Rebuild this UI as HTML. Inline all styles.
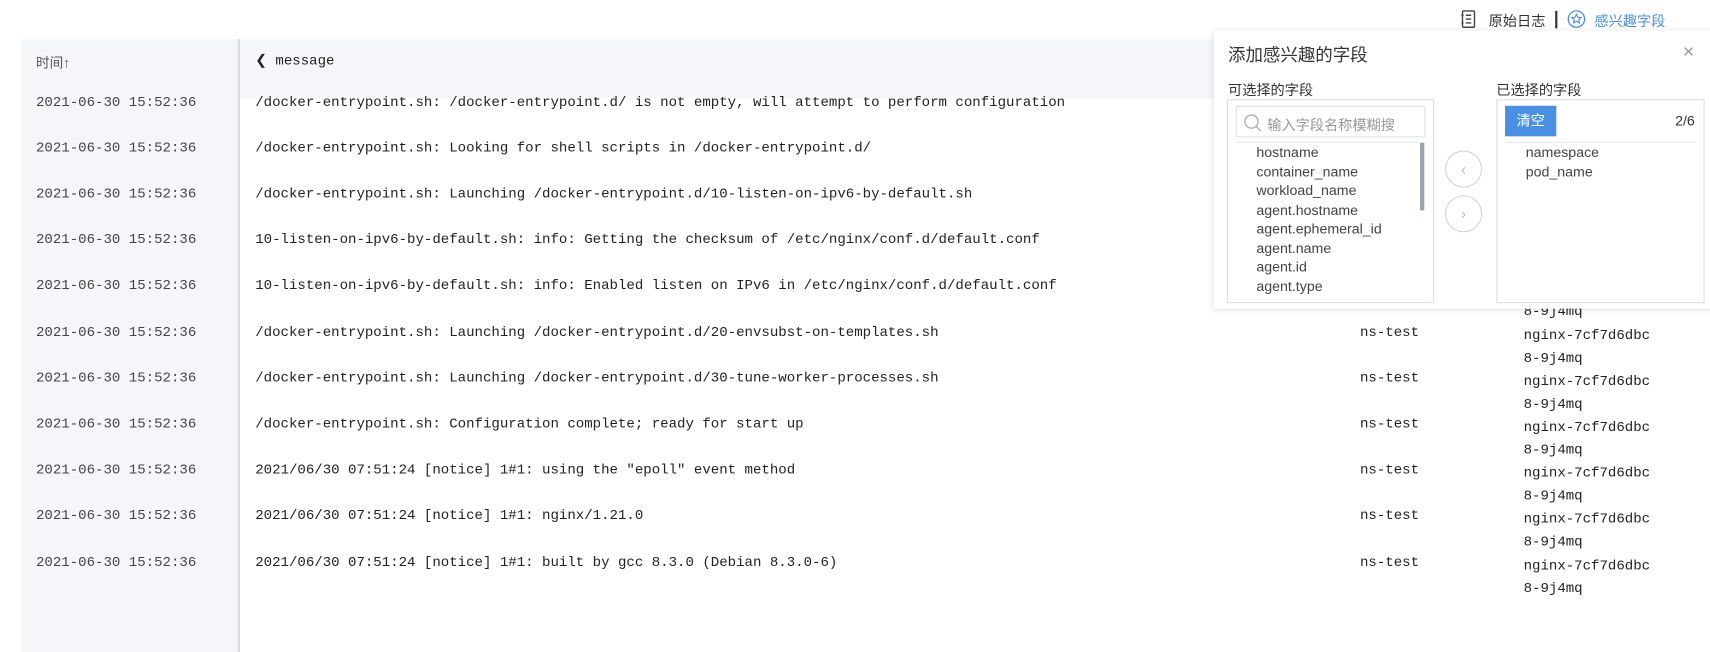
<!DOCTYPE html>
<html><head><meta charset="utf-8"><style>
*{margin:0;padding:0;box-sizing:border-box}
body{width:1710px;height:598px;overflow:hidden;background:#fff;position:relative;font-family:"Liberation Sans","Noto Sans CJK SC",sans-serif;color:#333}
#wrap{position:absolute;left:0;top:0;width:1568px;height:549px;transform:scale(1.0906);transform-origin:0 0}
.abs{position:absolute;white-space:nowrap}
.mono{font-family:"Liberation Mono","Noto Sans CJK SC",monospace;font-size:12.9px;color:#222}
.timecol{left:20px;top:36px;width:198px;height:562px;background:#f5f6fa}
.div{left:218px;top:36px;width:2px;height:562px;background:#d8dce6}
.hdr{left:220px;top:36px;width:900px;height:54px;background:#f5f6fa}
.time{color:#444}
.panel{left:1113px;top:28px;width:597px;height:255px;background:#fff;box-shadow:0 1px 6px rgba(0,0,0,.15);z-index:5}
.box{position:absolute;border:1px solid #dcdfe6;background:#fff}
.item{position:absolute;font-size:13px;color:#444}
.circ{position:absolute;width:34px;height:34px;border:1px solid #cfd4dc;border-radius:50%;color:#b8bec8;font-size:14px;text-align:center;line-height:32px}
</style></head><body>
<div id="wrap">
<div class="abs timecol"></div>
<div class="abs hdr"></div>
<div class="abs div"></div>
<div class="abs" style="left:33px;top:47px;font-size:12.5px;color:#555">时间↑</div>
<div class="abs mono" style="left:234px;top:48px">❮ message</div>

<svg class="abs" style="left:1339px;top:9px" width="16" height="17" viewBox="0 0 16 17"><rect x="2" y="1" width="11" height="15" rx="1" fill="none" stroke="#444" stroke-width="1.3"/><path d="M5 5h5M5 8.5h5M5 12h5M1 5h2M1 12h2" stroke="#444" stroke-width="1.3"/></svg>
<div class="abs" style="left:1365px;top:9px;font-size:13px;color:#333">原始日志</div>
<div class="abs" style="left:1426px;top:10px;width:2px;height:16px;background:#333"></div>
<svg class="abs" style="left:1437px;top:9px" width="17" height="17" viewBox="0 0 17 17"><circle cx="8.5" cy="8.5" r="7.5" fill="none" stroke="#4a90e2" stroke-width="1.2"/><path d="M8.5 4l1.3 2.8 3 .3-2.3 2 .7 3-2.7-1.6-2.7 1.6.7-3-2.3-2 3-.3z" fill="none" stroke="#4a90e2" stroke-width="1"/></svg>
<div class="abs" style="left:1462px;top:9px;font-size:13px;color:#4a90e2">感兴趣字段</div>

<div id="rows"></div>

<div class="abs panel">
 <div class="abs" style="left:13px;top:9px;font-size:16px;color:#333">添加感兴趣的字段</div>
 <div class="abs" style="left:430px;top:9px;font-size:18px;color:#999">×</div>
 <div class="abs" style="left:13px;top:44px;font-size:13px;color:#333">可选择的字段</div>
 <div class="abs" style="left:259px;top:44px;font-size:13px;color:#333">已选择的字段</div>
 <div class="box" style="left:12px;top:63px;width:190px;height:187px">
  <div class="box" style="left:7px;top:5px;width:174px;height:29px;border-radius:2px">
   <svg class="abs" style="left:6px;top:6px" width="17" height="17" viewBox="0 0 17 17"><circle cx="7.5" cy="7.5" r="6" fill="none" stroke="#aaa" stroke-width="1.2"/><path d="M12 12l4 4" stroke="#aaa" stroke-width="1.2"/></svg>
   <div class="abs" style="left:28px;top:6px;font-size:13px;color:#999">输入字段名称模糊搜</div>
  </div>
  <div class="abs" style="left:7px;top:38px;width:174px;height:1px;background:#e4e7ed"></div>
  <div class="abs" style="left:176px;top:39px;width:4px;height:62px;background:#9aa3b0;border-radius:1px"></div>
  <div class="item" style="left:26px;top:40px">hostname</div>
  <div class="item" style="left:26px;top:57.5px">container_name</div>
  <div class="item" style="left:26px;top:75px">workload_name</div>
  <div class="item" style="left:26px;top:92.5px">agent.hostname</div>
  <div class="item" style="left:26px;top:110px">agent.ephemeral_id</div>
  <div class="item" style="left:26px;top:127.5px">agent.name</div>
  <div class="item" style="left:26px;top:145px">agent.id</div>
  <div class="item" style="left:26px;top:162.5px">agent.type</div>
 </div>
 <div class="circ" style="left:212px;top:110px">‹</div>
 <div class="circ" style="left:212px;top:151px">›</div>
 <div class="box" style="left:259px;top:63px;width:191px;height:187px">
  <div class="abs" style="left:7px;top:5px;width:47px;height:28px;background:#4a90e2;color:#fff;font-size:13px;text-align:center;line-height:28px">清空</div>
  <div class="abs" style="right:8px;top:11px;font-size:13px;color:#333">2/6</div>
  <div class="abs" style="left:7px;top:38px;width:174px;height:1px;background:#e4e7ed"></div>
  <div class="item" style="left:26px;top:40px">namespace</div>
  <div class="item" style="left:26px;top:57.5px">pod_name</div>
 </div>
</div>
</div>

<script>
var msgs=["/docker-entrypoint.sh: /docker-entrypoint.d/ is not empty, will attempt to perform configuration","/docker-entrypoint.sh: Looking for shell scripts in /docker-entrypoint.d/","/docker-entrypoint.sh: Launching /docker-entrypoint.d/10-listen-on-ipv6-by-default.sh","10-listen-on-ipv6-by-default.sh: info: Getting the checksum of /etc/nginx/conf.d/default.conf","10-listen-on-ipv6-by-default.sh: info: Enabled listen on IPv6 in /etc/nginx/conf.d/default.conf","/docker-entrypoint.sh: Launching /docker-entrypoint.d/20-envsubst-on-templates.sh","/docker-entrypoint.sh: Launching /docker-entrypoint.d/30-tune-worker-processes.sh","/docker-entrypoint.sh: Configuration complete; ready for start up","2021/06/30 07:51:24 [notice] 1#1: using the \"epoll\" event method","2021/06/30 07:51:24 [notice] 1#1: nginx/1.21.0","2021/06/30 07:51:24 [notice] 1#1: built by gcc 8.3.0 (Debian 8.3.0-6)"];
var h="";
msgs.forEach(function(m,i){var t=85.5+42.2*i;
h+='<div class="abs mono time" style="left:33px;top:'+t+'px">2021-06-30 15:52:36</div>';
h+='<div class="abs mono" style="left:234px;top:'+t+'px"></div>';
h+='<div class="abs mono" style="left:1247px;top:'+t+'px">ns-test</div>';
h+='<div class="abs mono" style="left:1397px;top:'+t+'px;line-height:21px">nginx-7cf7d6dbc<br>8-9j4mq</div>';});
document.getElementById("rows").innerHTML=h;
var els=document.querySelectorAll("#rows .mono");
msgs.forEach(function(m,i){els[i*4+1].textContent=m;});
</script>
</body></html>
